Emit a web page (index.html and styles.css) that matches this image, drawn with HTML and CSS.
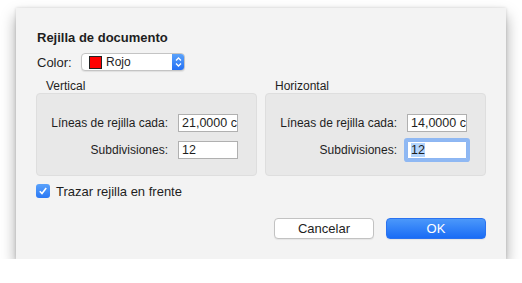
FILE: index.html
```html
<!DOCTYPE html>
<html lang="es">
<head>
    <meta charset="UTF-8">
    <meta name="viewport" content="width=device-width, initial-scale=1.0">
    <title>Rejilla de documento</title>
    <link rel="stylesheet" href="styles.css">
</head>
<body>

    <div class="ventana">
        <h1 class="titulo">Rejilla de documento</h1>

        <div class="fila-color">
            <span class="etiqueta">Color:</span>
            <div class="popup">
                <span class="muestra"></span>
                <span class="popup-texto">Rojo</span>
                <span class="flechas">
                    <svg width="7" height="10" viewBox="0 0 7 10">
                        <path d="M1 3.5 L3.5 1 L6 3.5 M1 6.5 L3.5 9 L6 6.5" fill="none" stroke="#fff" stroke-width="1.3"/>
                    </svg>
                </span>
            </div>
        </div>

        <div class="grupos">
            <div class="grupo">
                <div class="grupo-titulo">Vertical</div>
                <div class="caja">
                    <label class="campo-label">Líneas de rejilla cada:</label>
                    <div class="campo">21,0000 cm</div>
                    <label class="campo-label">Subdivisiones:</label>
                    <div class="campo">12</div>
                </div>
            </div>
            <div class="grupo">
                <div class="grupo-titulo">Horizontal</div>
                <div class="caja">
                    <label class="campo-label">Líneas de rejilla cada:</label>
                    <div class="campo">14,0000 cm</div>
                    <label class="campo-label">Subdivisiones:</label>
                    <div class="campo foco"><span class="seleccion">12</span></div>
                </div>
            </div>
        </div>

        <div class="fila-check">
            <span class="check">
                <svg width="10" height="10" viewBox="0 0 10 10">
                    <path d="M1.8 5.2 L4 7.6 L8.2 2" fill="none" stroke="#fff" stroke-width="1.6"/>
                </svg>
            </span>
            <span>Trazar rejilla en frente</span>
        </div>

        <div class="botones">
            <button class="boton">Cancelar</button>
            <button class="boton boton-ok">OK</button>
        </div>
    </div>

</body>
</html>
```

FILE: styles.css
```css
body {
    margin: 0;
    padding: 0;
    background-color: #ffffff;
    font-family: "Liberation Sans", Arial, sans-serif;
    font-size: 13px;
    color: #1e1e1e;
}

.ventana {
    margin: 8px 0 0 16px;
    width: 490px;
    height: 251px;
    box-sizing: border-box;
    padding: 22px 20px 0 20px;
    background-color: #f3f3f3;
    box-shadow: 0 8px 14px rgba(0, 0, 0, 0.35), 0 0 3px rgba(0, 0, 0, 0.15);
    display: flex;
    flex-direction: column;
}

.titulo {
    margin: 0 0 0 1px;
    font-size: 13px;
    line-height: 16px;
    font-weight: bold;
}

.fila-color {
    display: flex;
    align-items: center;
    margin-top: 7px;
    height: 18px;
}

.etiqueta {
    margin-left: 1px;
    width: 44px;
}

.popup {
    display: flex;
    align-items: center;
    width: 104px;
    height: 18px;
    box-sizing: border-box;
    background-color: #ffffff;
    border: 1px solid #c4c4c4;
    border-radius: 4px;
    box-shadow: 0 1px 1px rgba(0, 0, 0, 0.08);
    overflow: hidden;
}

.muestra {
    width: 11px;
    height: 11px;
    margin-left: 7px;
    background-color: #ff0000;
    border: 1px solid #222;
}

.popup-texto {
    margin-left: 4px;
    flex: 1;
    font-size: 12px;
}

.flechas {
    width: 12px;
    height: 16px;
    display: flex;
    align-items: center;
    justify-content: center;
    background: linear-gradient(#5aa2fb, #2470f4);
}

.grupos {
    display: flex;
    gap: 8px;
    margin-top: 9px;
}

.grupo {
    width: 221px;
}

.grupo-titulo {
    padding-left: 10px;
    font-size: 12px;
    line-height: 13px;
}

.caja {
    height: 83px;
    box-sizing: border-box;
    padding: 20px 0 0 0;
    background-color: #e8e8e8;
    border: 1px solid #dedede;
    border-radius: 4px;
    display: grid;
    grid-template-columns: 131px 60px;
    column-gap: 10px;
    row-gap: 9px;
    align-content: start;
}

.campo-label {
    text-align: right;
    font-size: 12px;
    line-height: 18px;
}

.campo {
    height: 18px;
    box-sizing: border-box;
    padding: 0 0 0 3px;
    background-color: #ffffff;
    border: 1px solid #b0b0b0;
    font-size: 12.5px;
    line-height: 16px;
    white-space: nowrap;
    overflow: hidden;
}

.foco {
    border-color: #8db6f2;
    box-shadow: 0 0 0 3px #8fb8f3;
    border-radius: 1px;
}

.seleccion {
    background-color: #b3d5fd;
}

.fila-check {
    display: flex;
    align-items: center;
    gap: 6px;
    margin-top: 8px;
    height: 14px;
}

.check {
    width: 14px;
    height: 14px;
    border-radius: 3px;
    background: linear-gradient(#5aa2fb, #2a78f5);
    display: flex;
    align-items: center;
    justify-content: center;
}

.botones {
    display: flex;
    justify-content: flex-end;
    gap: 12px;
    margin-top: 20px;
}

.boton {
    width: 100px;
    height: 21px;
    padding: 0;
    font-family: "Liberation Sans", Arial, sans-serif;
    font-size: 13px;
    color: #1e1e1e;
    background-color: #ffffff;
    border: 1px solid #c2c2c2;
    border-radius: 4px;
    box-shadow: 0 1px 1px rgba(0, 0, 0, 0.06);
}

.boton-ok {
    color: #ffffff;
    border-color: #2a72f0;
    background: linear-gradient(#4b98fa, #1a6cf5);
}
```
